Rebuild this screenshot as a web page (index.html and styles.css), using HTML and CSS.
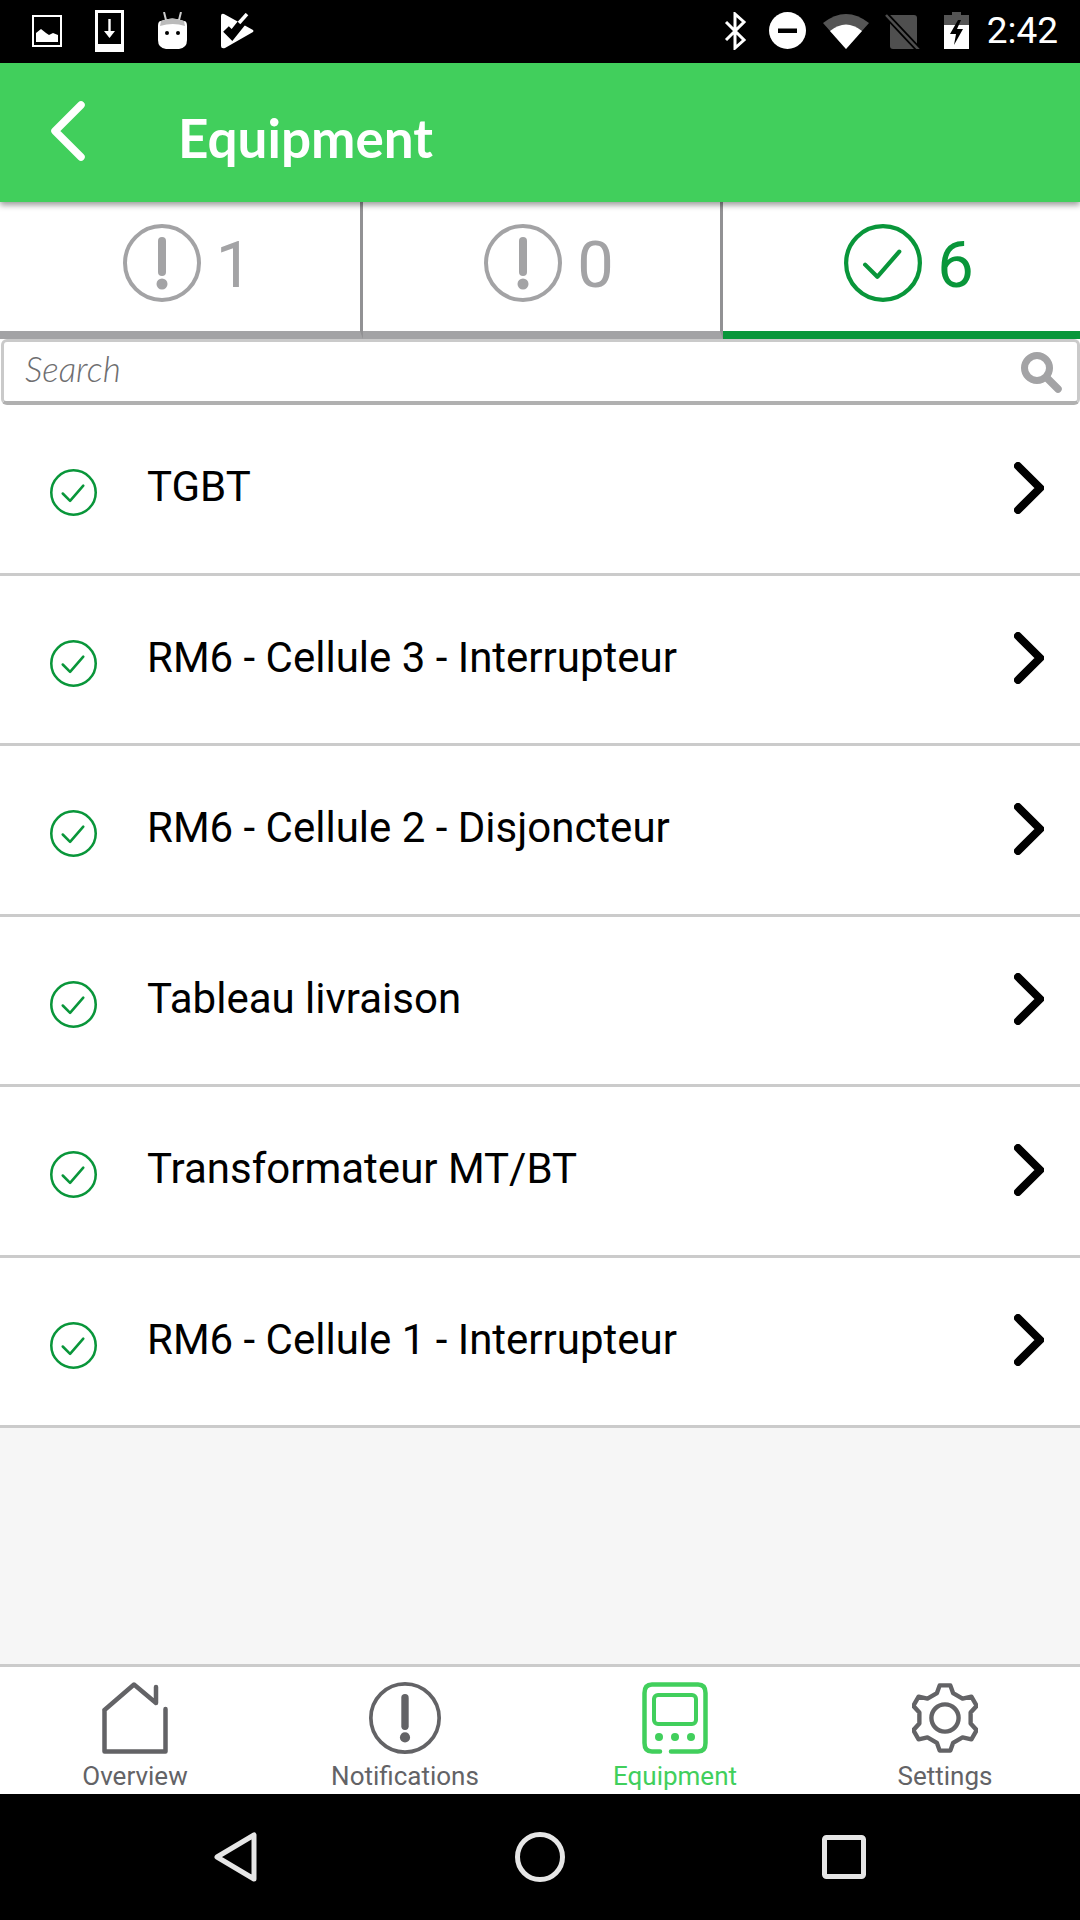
FILE: index.html
```html
<!DOCTYPE html>
<html lang="en">
<head>
<meta charset="utf-8">
<title>Equipment</title>
<link rel="stylesheet" href="styles.css">
</head>
<body>
<svg class="defs" width="0" height="0" aria-hidden="true">
  <symbol id="check" viewBox="0 0 48 48">
    <circle cx="24" cy="24" r="22.7" fill="none" stroke="currentColor" stroke-width="2.6"/>
    <path d="M13 25l7.5 7.5L34 17" fill="none" stroke="currentColor" stroke-width="2.6" stroke-linecap="round" stroke-linejoin="round"/>
  </symbol>
  <symbol id="alert" viewBox="0 0 78 78">
    <circle cx="39" cy="39" r="37" fill="none" stroke="currentColor" stroke-width="4"/>
    <path d="M39 17v31" fill="none" stroke="currentColor" stroke-width="8" stroke-linecap="round"/>
    <circle cx="39" cy="60" r="5.5" fill="currentColor"/>
  </symbol>
  <symbol id="chev" viewBox="0 0 30 52">
    <path d="M4 4l22 22L4 48" fill="none" stroke="#000" stroke-width="8" stroke-linecap="round" stroke-linejoin="miter"/>
  </symbol>
</svg>

<div class="status">
  <div class="status-left">
    <svg width="30" height="32" viewBox="0 0 30 32"><rect x="1" y="1" width="28" height="30" fill="none" stroke="#fff" stroke-width="2"/><path d="M4 27v-9l5-4 5 4 3 2 4-2 5 2v7z" fill="#fff"/></svg>
    <svg width="29" height="42" viewBox="0 0 29 42"><rect x="1.5" y="1.5" width="26" height="39" fill="none" stroke="#fff" stroke-width="3"/><rect x="0" y="34" width="29" height="8" fill="#fff"/><path d="M14.500 9v16" stroke="#fff" stroke-width="2.4"/><path d="M9 21h11l-5.500 7z" fill="#fff"/></svg>
    <svg width="31" height="38" viewBox="0 0 31 38"><path d="M7 0l2 8M24 0l-2 8" stroke="#ccc" stroke-width="2"/><path d="M4 9q11-5 23 0 3 0 3 5v14q0 8-8 9H9q-8-1-8-9V14q0-5 3-5z" fill="#fff"/><path d="M4 9q11-5 23 0l1 5q-12-4-25 0z" fill="#bbb"/><circle cx="10" cy="21" r="2" fill="#000"/><circle cx="21" cy="21" r="2" fill="#000"/></svg>
    <svg width="33" height="36" viewBox="0 0 33 36"><path d="M0 3q0-3 3-2L32 17q1 1 0 2L4 35q-4 1-4-2z" fill="#fff"/><path d="M5 16l6 6L27 2" fill="none" stroke="#000" stroke-width="8"/><path d="M18 10l8-9" fill="none" stroke="#fff" stroke-width="3.500"/></svg>
  </div>
  <div class="status-right">
    <svg class="bt" width="23" height="38" viewBox="0 0 23 38"><path d="M2 10l18 18-9 8V2l9 8L2 28" fill="none" stroke="#fff" stroke-width="3"/></svg>
    <svg class="dnd" width="37" height="37" viewBox="0 0 37 37"><circle cx="18.500" cy="18.500" r="18.500" fill="#fff"/><rect x="9" y="16.500" width="19" height="4.500" fill="#000"/></svg>
    <svg class="wifi" width="46" height="37" viewBox="0 0 46 37"><path d="M0 11Q23-7 46 11L23 37z" fill="#555"/><path d="M7 19Q23 6 39 19L23 37z" fill="#fff"/></svg>
    <svg class="sim" width="36" height="36" viewBox="0 0 36 36"><path d="M5 2H29q3 0 3 3V33q0 3-3 3H8q-3 0-3-3z" fill="#4f4f4f"/><path d="M1 2l33 35" stroke="#000" stroke-width="6"/><path d="M1 2l33 35" stroke="#4f4f4f" stroke-width="2.500"/></svg>
    <svg class="batt" width="25" height="37" viewBox="0 0 25 37"><path d="M8 0h9v3h8v12H0V3h8z" fill="#555"/><path d="M0 13h25v24H0z" fill="#fff"/><path d="M14 8L6 22h6l-2 11 9-16h-6l4-9z" fill="#000"/></svg>
    <span class="time">2:42</span>
  </div>
</div>

<header class="appbar">
  <svg class="back" width="36" height="60" viewBox="0 0 36 60"><path d="M31 4L5 30l26 26" fill="none" stroke="#fff" stroke-width="7.500" stroke-linecap="round" stroke-linejoin="round"/></svg>
  <h1 class="title">Equipment</h1>
</header>

<nav class="tabs">
  <div class="tab tab-div"><svg class="tab-icon"><use href="#alert"/></svg><span class="tab-num">1</span></div>
  <div class="tab tab-div"><svg class="tab-icon"><use href="#alert"/></svg><span class="tab-num">0</span></div>
  <div class="tab tab-on"><svg class="tab-icon"><use href="#check"/></svg><span class="tab-num">6</span></div>
</nav>

<div class="search">
  <span class="search-text">Search</span>
  <svg width="42" height="42" viewBox="0 0 42 42"><circle cx="17" cy="17" r="12.500" fill="none" stroke="#a3a3a5" stroke-width="7"/><path d="M27 27l11 11" stroke="#a3a3a5" stroke-width="7.500" stroke-linecap="round"/></svg>
</div>

<main class="main">
  <ul class="list">
    <li class="row"><svg class="row-check"><use href="#check"/></svg><span class="row-label">TGBT</span><svg class="row-chev"><use href="#chev"/></svg></li>
    <li class="row"><svg class="row-check"><use href="#check"/></svg><span class="row-label">RM6 - Cellule 3 - Interrupteur</span><svg class="row-chev"><use href="#chev"/></svg></li>
    <li class="row"><svg class="row-check"><use href="#check"/></svg><span class="row-label">RM6 - Cellule 2 - Disjoncteur</span><svg class="row-chev"><use href="#chev"/></svg></li>
    <li class="row"><svg class="row-check"><use href="#check"/></svg><span class="row-label">Tableau livraison</span><svg class="row-chev"><use href="#chev"/></svg></li>
    <li class="row"><svg class="row-check"><use href="#check"/></svg><span class="row-label">Transformateur MT/BT</span><svg class="row-chev"><use href="#chev"/></svg></li>
    <li class="row"><svg class="row-check"><use href="#check"/></svg><span class="row-label">RM6 - Cellule 1 - Interrupteur</span><svg class="row-chev"><use href="#chev"/></svg></li>
  </ul>
</main>

<footer class="bottom">
  <div class="bt-item">
    <svg class="bt-icon" width="66" height="72" viewBox="0 0 66 72"><path d="M2.500 28V69.500H63.500V27M54 21V5V21L32 2.500 2.500 28" fill="none" stroke="#636366" stroke-width="4.500" stroke-linejoin="round" stroke-linecap="round"/></svg>
    <span class="bt-label">Overview</span>
  </div>
  <div class="bt-item">
    <svg class="bt-icon bt-alert" width="72" height="72"><use href="#alert"/></svg>
    <span class="bt-label">Notifications</span>
  </div>
  <div class="bt-item bt-on">
    <svg class="bt-icon" width="66" height="72" viewBox="0 0 66 72"><path d="M18 69.500H10Q2.500 69.500 2.500 61V11Q2.500 2.500 10 2.500H56Q63.500 2.500 63.500 11V61Q63.500 69.500 56 69.500H29" fill="none" stroke="#41cf5c" stroke-width="4.500" stroke-linecap="round"/><rect x="12" y="13" width="42" height="29" rx="4" fill="none" stroke="#41cf5c" stroke-width="4"/><circle cx="17" cy="55" r="4" fill="#41cf5c"/><circle cx="33" cy="55" r="4" fill="#41cf5c"/><circle cx="49" cy="55" r="4" fill="#41cf5c"/></svg>
    <span class="bt-label">Equipment</span>
  </div>
  <div class="bt-item">
    <svg class="bt-icon" width="66" height="72" viewBox="0 0 68 72"><path d="M25.700 10.300L28.500 2.400H39.500L42.300 10.300L52.070 15.930L61.200 13.970L66.700 23.460L60.400 30.390V41.610L66.700 48.540L61.200 58.030L52.070 56.070L42.300 61.700L39.500 69.600H28.500L25.700 61.700L15.930 56.070L6.800 58.030L1.300 48.540L7.600 41.610V30.390L1.300 23.460L6.800 13.970L15.930 15.930z" fill="none" stroke="#636366" stroke-width="4.500" stroke-linejoin="round"/><circle cx="34" cy="36" r="14" fill="none" stroke="#636366" stroke-width="4.500"/></svg>
    <span class="bt-label">Settings</span>
  </div>
</footer>

<div class="navbar">
  <svg width="44" height="50" viewBox="0 0 44 50"><path d="M40 3v44L3 25z" fill="none" stroke="#e6e6e6" stroke-width="5" stroke-linejoin="round"/></svg>
  <svg width="50" height="50" viewBox="0 0 50 50"><circle cx="25" cy="25" r="22.500" fill="none" stroke="#e6e6e6" stroke-width="5"/></svg>
  <svg width="44" height="44" viewBox="0 0 44 44"><rect x="2.500" y="2.500" width="39" height="39" rx="2" fill="none" stroke="#e6e6e6" stroke-width="5"/></svg>
</div>
</body>
</html>
```

FILE: styles.css
```css
* { box-sizing: border-box; }
html, body { margin: 0; padding: 0; }
body {
  width: 1080px;
  height: 1920px;
  overflow: hidden;
  display: flex;
  flex-direction: column;
  background: #fff;
  font-family: Roboto, "Liberation Sans", sans-serif;
}
.defs { display: block; height: 0; }

/* status bar */
.status {
  height: 63px;
  flex: none;
  background: #000;
  display: flex;
  align-items: center;
  justify-content: space-between;
  padding: 0 22px 2px 32px;
}
.status-left { display: flex; align-items: center; gap: 33px; }
.status-right { display: flex; align-items: center; gap: 17px; }
.bt { margin-right: 5px; }
.sim { margin-left: -1px; }
.batt { margin-left: 6px; }
.time { color: #fff; font-size: 37px; line-height: 40px; margin-left: 1px; }

/* app bar */
.appbar {
  height: 139px;
  flex: none;
  background: #41cf5c;
  display: flex;
  align-items: center;
  padding: 0 0 0 50px;
  gap: 92px;
  box-shadow: 0 3px 6px rgba(0, 0, 0, .4);
  position: relative;
  z-index: 2;
}
.back { margin-bottom: 4px; }
.title {
  margin: 10px 0 0;
  color: #fff;
  font-family: Lato, sans-serif;
  font-size: 53px;
  font-weight: 700;
  line-height: 60px;
}

/* segment tabs */
.tabs { display: grid; grid-template-columns: 363px 360px 357px; height: 137px; flex: none; }
.tab {
  display: flex;
  align-items: center;
  justify-content: center;
  gap: 15px;
  color: #a3a3a5;
  border-bottom: 8px solid #a3a3a5;
  padding: 0 0 7px 15px;
}
.tab-div { border-right: 3px solid #929294; }
.tab-on { color: #09963a; border-bottom-color: #09963a; }
.tab-icon { width: 78px; height: 78px; }
.tab-num { font-size: 65px; line-height: 70px; margin-top: 4px; }

/* search */
.search {
  height: 66px;
  flex: none;
  margin: 0 0 0 1px;
  border: 3px solid #cacaca;
  border-bottom: 4px solid #b0b0b0;
  border-radius: 6px;
  display: flex;
  align-items: center;
  justify-content: space-between;
  padding: 0 15px 0 21px;
}
.search-text {
  font-family: Lato, sans-serif;
  font-style: italic;
  font-weight: 300;
  font-size: 35px;
  line-height: 40px;
  margin-bottom: 7px;
  color: #6e6e70;
}

/* list */
.main { flex: 1; background: #f6f6f6; }
.list { margin: 0; padding: 0; list-style: none; background: #fff; }
.row {
  height: 170.5px;
  border-bottom: 3px solid #cbcbcb;
  display: flex;
  align-items: center;
  padding: 0 36px 0 50px;
}
.row-check { width: 47px; height: 47px; color: #09963a; margin: 8px 50px 0 0; flex: none; }
.row-label { flex: 1; font-size: 42px; line-height: 48px; color: #000; margin-bottom: 3px; }
.row-chev { width: 30px; height: 52px; flex: none; margin-bottom: 2px; }

/* bottom bar */
.bottom {
  height: 130px;
  flex: none;
  border-top: 3px solid #cbcbcb;
  display: flex;
  background: #fff;
  padding-top: 15px;
}
.bt-item {
  flex: 1 1 0;
  display: flex;
  flex-direction: column;
  align-items: center;
  color: #636366;
}
.bt-on { color: #41cf5c; }
.bt-icon { flex: none; }
.bt-label { font-size: 26px; line-height: 30px; margin-top: 7px; }

/* android nav */
.navbar {
  height: 126px;
  flex: none;
  background: #000;
  display: flex;
  align-items: center;
  justify-content: center;
  gap: 257px;
}
```
